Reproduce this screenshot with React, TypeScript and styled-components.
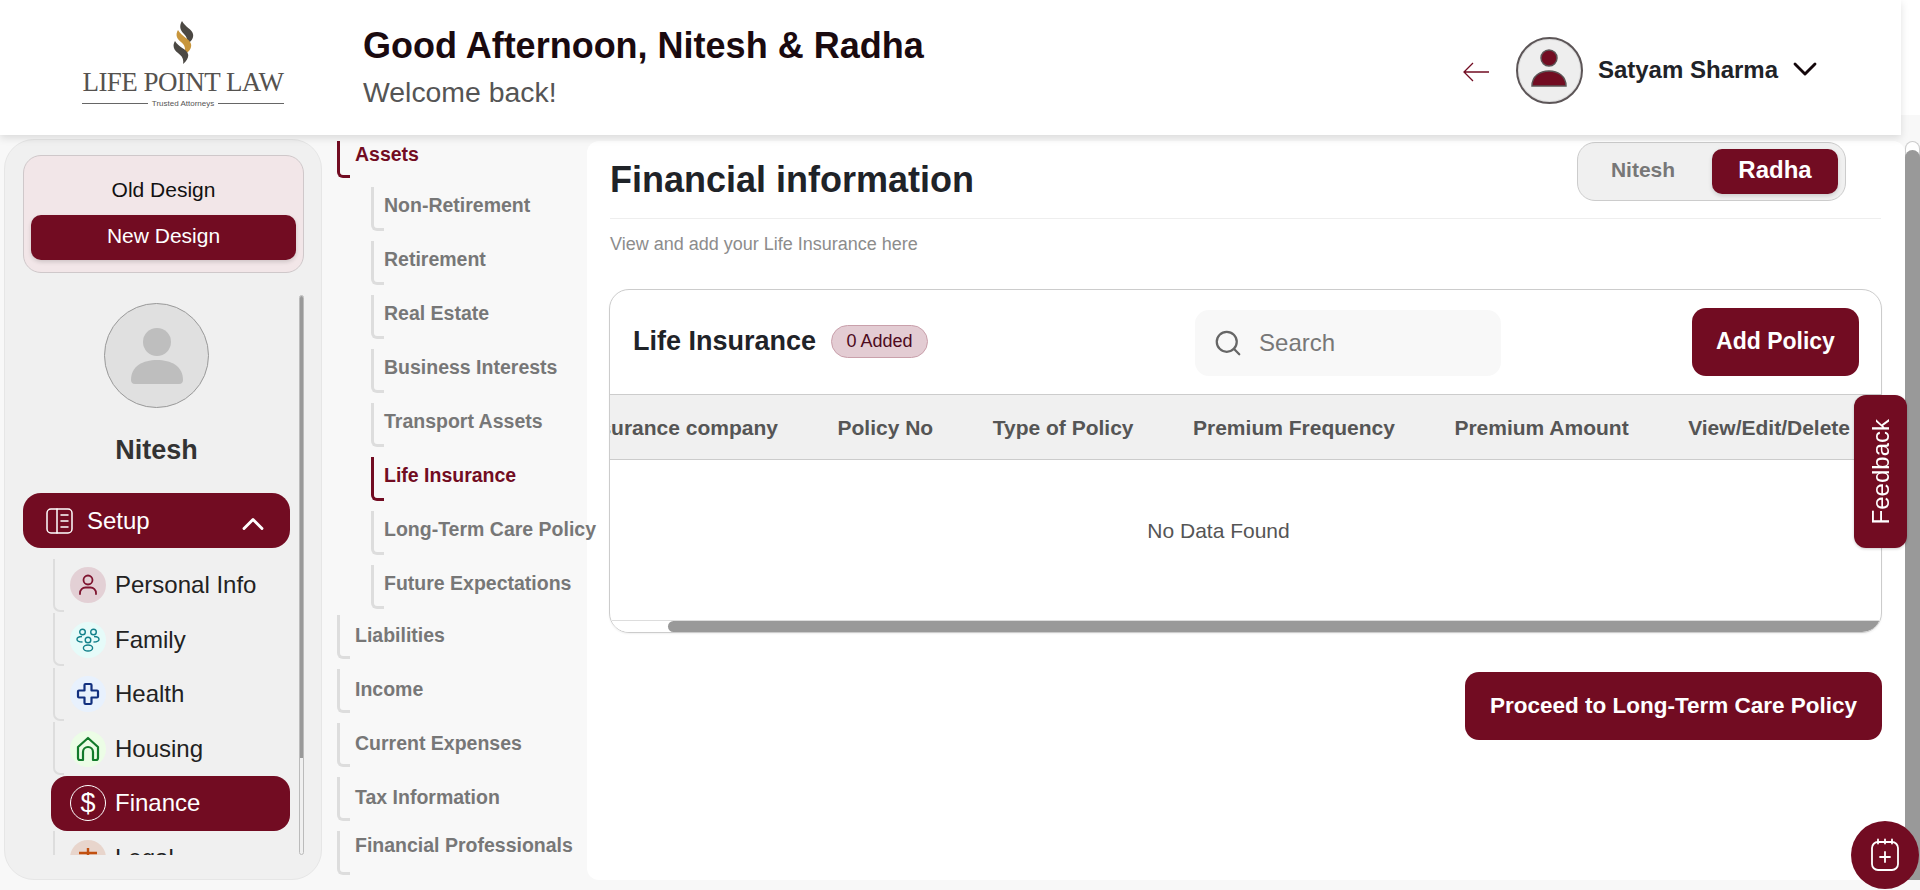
import React from "react";
import styled, { createGlobalStyle } from "styled-components";
import { ChevronDown, ChevronUp, Search } from "lucide-react";

const PRIMARY = "#720c22";

const GlobalStyle = createGlobalStyle`
  html, body {
    margin: 0;
    padding: 0;
    height: 890px;
    overflow: hidden;
    background: #f8f8f8;
    font-family: "Liberation Sans", Arial, sans-serif;
  }
  * {
    box-sizing: border-box;
  }
`;

const Page = styled.div`
  width: 1920px;
  height: 890px;
  display: flex;
  flex-direction: column;
  overflow: hidden;
  background: #f8f8f8;
`;

const TopBand = styled.div`
  height: 135px;
  flex: none;
  background: linear-gradient(#fff 115px, #f8f8f8 115px);
  position: relative;
  z-index: 3;
`;

const Header = styled.header`
  width: 1901px;
  height: 135px;
  display: flex;
  align-items: center;
  padding: 0 86px 0 82px;
  background: #fff;
  box-shadow: 0 3px 8px rgba(0, 0, 0, 0.12);
`;

const Logo = styled.div`
  width: 202px;
  margin-right: 79px;
  margin-bottom: 6px;
  display: flex;
  flex-direction: column;
  align-items: center;
`;

const LogoName = styled.div`
  font-family: "Liberation Serif", serif;
  font-size: 27px;
  line-height: 27px;
  letter-spacing: -0.55px;
  color: #55524f;
  white-space: nowrap;
  margin-top: 5px;
`;

const LogoTag = styled.div`
  width: 100%;
  display: flex;
  align-items: center;
  gap: 4px;
  margin-top: 3px;
  font-size: 8px;
  line-height: 10px;
  color: #555;
  white-space: nowrap;

  &::before,
  &::after {
    content: "";
    flex: 1;
    height: 1px;
    background: #666;
  }
`;

const Greeting = styled.div`
  display: flex;
  flex-direction: column;
  gap: 7px;
  margin-top: -2px;
`;

const Hello = styled.h1`
  margin: 0;
  font-size: 36px;
  line-height: 44px;
  font-weight: 700;
  color: #1a0a0f;
`;

const Welcome = styled.div`
  font-size: 28.4px;
  line-height: 34px;
  color: #555;
`;

const UserArea = styled.div`
  margin-left: auto;
  margin-top: 5px;
  display: flex;
  align-items: center;
`;

const BackArrow = styled.svg`
  width: 26px;
  height: 20px;
  margin-right: 27px;
  margin-top: 4px;
`;

const UserAvatar = styled.div`
  width: 67px;
  height: 67px;
  border-radius: 50%;
  border: 2px solid #5c5557;
  background: #eee;
  box-shadow: inset 0 0 0 1px #ddd;
  display: flex;
  align-items: center;
  justify-content: center;
  margin-right: 15px;
`;

const UserName = styled.div`
  font-size: 24px;
  font-weight: 700;
  color: #1f2328;
  white-space: nowrap;
  margin-right: 17px;
`;

const UserChevron = styled(ChevronDown)`
  width: 40px;
  height: 40px;
  margin: -2px -10px 0;
  color: #14070b;
  stroke-width: 1.7;
`;

const Body = styled.div`
  flex: 1;
  min-height: 0;
  display: flex;
  padding-top: 4px;
  padding-left: 4px;
`;

const Sidebar = styled.aside`
  width: 318px;
  height: 741px;
  flex: none;
  background: #f0f0f0;
  border: 1px solid #e6e6e6;
  border-radius: 30px;
  padding: 15px 17px 0 18px;
`;

const DesignCard = styled.div`
  height: 118px;
  background: #f2e6e8;
  border: 1px solid #cfc8ca;
  border-radius: 18px;
  padding: 0 7px;
  display: flex;
  flex-direction: column;
  align-items: stretch;
`;

const OldDesign = styled.div`
  height: 59px;
  display: flex;
  align-items: center;
  justify-content: center;
  font-size: 21px;
  padding-top: 9px;
  color: #111;
`;

const NewDesign = styled.div`
  height: 45px;
  display: flex;
  align-items: center;
  justify-content: center;
  border-radius: 10px;
  background: ${PRIMARY};
  color: #fff;
  font-size: 21px;
  padding-bottom: 3px;
  box-shadow: 0 2px 4px rgba(0, 0, 0, 0.15);
`;

const SideScroll = styled.div`
  height: 560px;
  margin-top: 22px;
  display: flex;
  overflow: hidden;
`;

const SideContent = styled.div`
  width: 267px;
  flex: none;
  overflow: hidden;
`;

const SideTrack = styled.div`
  width: 5px;
  height: 560px;
  margin-left: 9px;
  border: 1px solid #bbb;
  border-radius: 3px;
  overflow: hidden;
`;

const SideThumb = styled.div`
  height: 462px;
  background: #999;
`;

const ProfilePhoto = styled.div`
  width: 105px;
  height: 105px;
  margin: 8px auto 0;
  border-radius: 50%;
  border: 1px solid #999;
  background: #e0e0e0;
  display: flex;
  align-items: center;
  justify-content: center;
`;

const ProfileName = styled.div`
  margin-top: 26px;
  text-align: center;
  font-size: 27px;
  line-height: 32px;
  font-weight: 700;
  color: #333;
`;

const SetupButton = styled.div`
  height: 55px;
  margin-top: 27px;
  border-radius: 18px;
  background: ${PRIMARY};
  color: #fff;
  display: flex;
  align-items: center;
  padding: 0 19px 0 23px;
  font-size: 24px;
  gap: 14px;
`;

const SetupChevron = styled(ChevronUp)`
  margin-left: auto;
  margin-top: 6px;
  width: 36px;
  height: 36px;
  stroke-width: 1.9;
`;

const MenuList = styled.div`
  margin-top: 10px;
  padding-left: 30px;
`;

const MenuRow = styled.div<{ $active?: boolean }>`
  height: 54.5px;
  display: flex;
  align-items: center;
  font-size: 24px;
  color: ${(p) => (p.$active ? "#fff" : "#222")};
  background: ${(p) => (p.$active ? PRIMARY : "transparent")};
  border-radius: ${(p) => (p.$active ? "16px" : "0")};
  margin-left: ${(p) => (p.$active ? "-2px" : "0")};
  padding-left: ${(p) => (p.$active ? "2px" : "0")};
`;

const MenuBracket = styled.span<{ $hidden?: boolean }>`
  width: 11px;
  height: 53px;
  flex: none;
  border-left: 2px solid ${(p) => (p.$hidden ? "transparent" : "#ddd")};
  border-bottom: 2px solid ${(p) => (p.$hidden ? "transparent" : "#ddd")};
  border-bottom-left-radius: 7px;
  margin-right: 6px;
`;

const IconCircle = styled.span<{ $bg: string; $outlined?: boolean }>`
  width: 36px;
  height: 36px;
  flex: none;
  border-radius: 50%;
  background: ${(p) => p.$bg};
  border: ${(p) => (p.$outlined ? "1.5px solid #fff" : "none")};
  display: flex;
  align-items: center;
  justify-content: center;
  margin-right: 9px;
`;

const DollarSign = styled.span`
  font-size: 27px;
  line-height: 27px;
  color: #fff;
`;

const SubNav = styled.nav`
  width: 265px;
  flex: none;
  display: flex;
  flex-direction: column;
  padding: 2px 0 0 15px;
  position: relative;
  z-index: 1;
`;

const NavRow = styled.div<{ $active?: boolean; $height?: number }>`
  height: ${(p) => p.$height ?? 43.5}px;
  flex: none;
  display: flex;
  align-items: flex-start;
  margin-bottom: 10.5px;
  font-size: 19.5px;
  line-height: 24px;
  font-weight: 700;
  white-space: nowrap;
  color: ${(p) => (p.$active ? PRIMARY : "#777")};
`;

const NavBracket = styled.span<{ $active?: boolean }>`
  width: 13px;
  height: 100%;
  flex: none;
  border-left: 3px solid ${(p) => (p.$active ? PRIMARY : "#ddd")};
  border-bottom: 3px solid ${(p) => (p.$active ? PRIMARY : "#ddd")};
  border-bottom-left-radius: 6px;
`;

const NavLabel = styled.span<{ $top: number; $gap?: number }>`
  margin-top: ${(p) => p.$top}px;
  margin-left: ${(p) => p.$gap ?? 5}px;
`;

const SubGroup = styled.div`
  flex: none;
  padding-left: 34px;
  margin-top: -1.5px;
  margin-bottom: -4px;
`;

const Main = styled.main`
  width: 1318px;
  height: 739px;
  flex: none;
  margin-top: 2px;
  background: #fff;
  border-radius: 12px;
  padding: 0 24px 0 23px;
`;

const TitleRow = styled.div`
  height: 78px;
  border-bottom: 1px solid #eee;
  display: flex;
  justify-content: space-between;
  align-items: flex-start;
  padding-right: 35px;
`;

const PageTitle = styled.h2`
  margin: 18px 0 0;
  font-size: 36px;
  line-height: 42px;
  font-weight: 700;
  color: #1f2328;
`;

const Toggle = styled.div`
  width: 269px;
  height: 59px;
  margin-top: 1px;
  border: 1px solid #ccc;
  border-radius: 18px;
  background: #f0f0f0;
  display: flex;
  align-items: center;
  padding: 0 7px 0 0;
`;

const ToggleOption = styled.div<{ $active?: boolean }>`
  height: 45px;
  flex: ${(p) => (p.$active ? "0 0 126px" : "1")};
  display: flex;
  align-items: center;
  justify-content: center;
  border-radius: 10px;
  font-weight: 700;
  font-size: ${(p) => (p.$active ? "24px" : "21px")};
  color: ${(p) => (p.$active ? "#fff" : "#777")};
  background: ${(p) => (p.$active ? PRIMARY : "transparent")};
  box-shadow: ${(p) => (p.$active ? "0 2px 4px rgba(0,0,0,0.15)" : "none")};
  padding-bottom: 3px;
  padding-right: ${(p) => (p.$active ? "0" : "4px")};
`;

const Subtitle = styled.p`
  margin: 15px 0 0;
  font-size: 18px;
  line-height: 20px;
  color: #8c8c8c;
`;

const TableCard = styled.section`
  margin: 35px -1px 0;
  height: 344px;
  border: 1px solid #ccc;
  border-radius: 20px;
  overflow: hidden;
  display: flex;
  flex-direction: column;
  box-shadow: 0 1px 2px rgba(0, 0, 0, 0.06);
`;

const CardHead = styled.div`
  height: 104px;
  flex: none;
  display: flex;
  align-items: center;
  padding: 0 22px 0 23px;
`;

const CardTitle = styled.h3`
  margin: -1px 15px 0 0;
  font-size: 27px;
  font-weight: 700;
  color: #1f2328;
`;

const CountBadge = styled.span`
  height: 33px;
  width: 97px;
  display: flex;
  align-items: center;
  justify-content: center;
  border: 1px solid #c9a0ab;
  border-radius: 17px;
  background: #e3ccd3;
  color: #4e0a1c;
  font-size: 18px;
  margin-top: -1px;
`;

const SearchBox = styled.div`
  width: 306px;
  height: 66px;
  margin-left: 267px;
  margin-top: 2px;
  border-radius: 14px;
  background: #f8f8f8;
  display: flex;
  align-items: center;
  gap: 16px;
  padding-left: 18px;
  color: #777;
  font-size: 24px;
`;

const SearchIcon = styled(Search)`
  width: 30px;
  height: 30px;
  stroke-width: 1.8;
  color: #666;
`;

const PrimaryButton = styled.button<{ $w: number; $size?: number }>`
  width: ${(p) => p.$w}px;
  height: 68px;
  flex: none;
  border: none;
  border-radius: 14px;
  background: ${PRIMARY};
  color: #fff;
  font-family: inherit;
  font-size: ${(p) => p.$size ?? 23}px;
  font-weight: 700;
  white-space: nowrap;
  padding: 0 0 1px;
`;

const AddButton = styled(PrimaryButton)`
  margin-left: auto;
`;

const TableHead = styled.div`
  height: 66px;
  flex: none;
  border-top: 1px solid #ccc;
  border-bottom: 1px solid #ccc;
  background: #f0f0f0;
  display: flex;
  align-items: center;
  justify-content: flex-end;
  gap: 59.5px;
  overflow: hidden;
  padding: 2px 31px 0 0;
  font-size: 21px;
  font-weight: 700;
  color: #555;
  white-space: nowrap;
`;

const TableBody = styled.div`
  flex: 1;
  display: flex;
  align-items: center;
  justify-content: center;
  padding-right: 54px;
  padding-bottom: 18px;
  font-size: 21px;
  color: #555;
`;

const HScroll = styled.div`
  height: 12px;
  flex: none;
  padding-left: 58px;
  background: #fff;
  border-top: 1px solid #ddd;
`;

const HThumb = styled.div`
  height: 100%;
  background: #999;
  border-radius: 6px 0 0 6px;
`;

const ProceedRow = styled.div`
  margin: 39px -1px 0 0;
  display: flex;
  justify-content: flex-end;
`;

const PageScroll = styled.div`
  width: 15px;
  height: 739px;
  flex: none;
  margin-top: 2px;
  background: #fff;
  border: 1px solid #ccc;
  border-bottom: none;
  border-radius: 8px 8px 0 0;
  padding-top: 8px;
`;

const PageThumb = styled.div`
  height: 100%;
  margin: 0 -1px;
  background: #999;
  border-radius: 8px 8px 0 0;
`;

const FeedbackTab = styled.div`
  position: fixed;
  left: 1854px;
  top: 395px;
  width: 53px;
  height: 153px;
  border-radius: 12px;
  background: ${PRIMARY};
  color: #fff;
  font-size: 24px;
  display: flex;
  align-items: center;
  justify-content: center;
  z-index: 5;
  box-shadow: 0 1px 3px rgba(0, 0, 0, 0.2);
`;

const FeedbackText = styled.span`
  writing-mode: vertical-rl;
  transform: rotate(180deg);
`;

const CalendarFab = styled.div`
  position: fixed;
  left: 1851px;
  top: 821px;
  width: 68px;
  height: 68px;
  border-radius: 50%;
  background: ${PRIMARY};
  display: flex;
  align-items: center;
  justify-content: center;
  z-index: 5;
`;

const FlameLogo = () => (
  <svg width="21" height="43" viewBox="0 0 21 43">
    <path d="M9 0C6 5 7 9 11 13c3 3 4 6 2 11 5-3 8-7 7-11-1-5-8-7-11-13Z" fill="#4b4843" />
    <path d="M5 9C2 14 4 18 8 21c4 3 5 7 3 13 5-3 8-7 7-11-1-5-10-8-13-14Z" fill="#c8963c" />
    <path d="M2 20c-3 5-1 9 3 12 4 3 6 6 5 11 4-3 6-7 5-10-1-5-10-7-13-13Z" fill="#4b4843" />
  </svg>
);

const AvatarGlyph = () => (
  <svg width="38" height="42" viewBox="0 0 38 42">
    <circle cx="19" cy="9" r="8" fill={PRIMARY} stroke="#5c5557" strokeWidth="1.5" />
    <path d="M2 37c0-10 8-15 17-15s17 5 17 15Z" fill={PRIMARY} stroke="#5c5557" strokeWidth="1.5" />
  </svg>
);

const ProfileGlyph = () => (
  <svg width="56" height="56" viewBox="0 0 56 56">
    <circle cx="28" cy="14" r="14" fill="#bebebe" />
    <path d="M2 52c0-14 12-20 26-20s26 6 26 20c0 2-1 4-4 4H6c-3 0-4-2-4-4Z" fill="#bebebe" />
  </svg>
);

const SetupGlyph = () => (
  <svg width="27" height="26" viewBox="0 0 27 26" fill="none" stroke="#fff" strokeWidth="1.5" strokeLinecap="round">
    <rect x="1" y="1" width="25" height="24" rx="4" />
    <path d="M11 1v24M15 7h7M15 13h7M15 19h7" />
  </svg>
);

const PersonGlyph = () => (
  <svg width="24" height="24" viewBox="0 0 24 24" fill="none" stroke="#7f1530" strokeWidth="1.8" strokeLinecap="round">
    <circle cx="12" cy="7" r="4.5" />
    <path d="M4 21v-1a5.500 5.500 0 0 1 5.500-5.500h5A5.500 5.500 0 0 1 20 20v1" />
  </svg>
);

const FamilyGlyph = () => (
  <svg width="24" height="24" viewBox="0 0 24 24" fill="none" stroke="#12808a" strokeWidth="1.4">
    <circle cx="6.5" cy="4" r="2.8" />
    <circle cx="17.5" cy="4" r="2.8" />
    <circle cx="12" cy="12" r="2.8" />
    <ellipse cx="12" cy="20" rx="4.6" ry="3" />
    <path d="M6 8.500c-3.500 0-5 1.500-5 2.800S3 14 6.500 14M18 8.500c3.500 0 5 1.500 5 2.800S21 14 17.500 14" />
  </svg>
);

const HealthGlyph = () => (
  <svg width="24" height="24" viewBox="0 0 24 24" fill="none" stroke="#12307f" strokeWidth="2.2" strokeLinejoin="round">
    <path d="M9.500 2h5a1 1 0 0 1 1 1v5.500H21a1 1 0 0 1 1 1v5a1 1 0 0 1-1 1h-5.500V21a1 1 0 0 1-1 1h-5a1 1 0 0 1-1-1v-5.500H3a1 1 0 0 1-1-1v-5a1 1 0 0 1 1-1h5.500V3a1 1 0 0 1 1-1Z" />
  </svg>
);

const HousingGlyph = () => (
  <svg width="24" height="26" viewBox="0 0 24 26" fill="none" stroke="#137a2b" strokeWidth="2.2" strokeLinejoin="round">
    <path d="M12 2 2 11v11a2 2 0 0 0 2 2h3v-8a5 5 0 0 1 10 0v8h3a2 2 0 0 0 2-2V11Z" />
  </svg>
);

const LegalGlyph = () => (
  <svg width="24" height="24" viewBox="0 0 24 24" fill="none" stroke="#c2500f" strokeWidth="2.4">
    <path d="M12 2v20M3 7h18M6 22h12" />
  </svg>
);

const CalendarGlyph = () => (
  <svg width="30" height="34" viewBox="0 0 30 34" fill="none" stroke="#fff" strokeWidth="1.8" strokeLinecap="round">
    <rect x="2" y="4" width="26" height="28" rx="6" />
    <path d="M8 1.500v4M15 1.500v4M22 1.500v4M15 14v10M10 19h10" />
  </svg>
);

const subItems = [
  { label: "Non-Retirement" },
  { label: "Retirement" },
  { label: "Real Estate" },
  { label: "Business Interests" },
  { label: "Transport Assets" },
  { label: "Life Insurance", active: true },
  { label: "Long-Term Care Policy" },
  { label: "Future Expectations" },
];

const topItems = ["Liabilities", "Income", "Current Expenses", "Tax Information"];

const columns = [
  "Insurance company",
  "Policy No",
  "Type of Policy",
  "Premium Frequency",
  "Premium Amount",
  "View/Edit/Delete",
];

const App = () => {
  return (
    <Page>
      <GlobalStyle />
      <TopBand>
        <Header>
          <Logo>
            <FlameLogo />
            <LogoName>LIFE POINT LAW</LogoName>
            <LogoTag>Trusted Attorneys</LogoTag>
          </Logo>
          <Greeting>
            <Hello>Good Afternoon, Nitesh &amp; Radha</Hello>
            <Welcome>Welcome back!</Welcome>
          </Greeting>
          <UserArea>
            <BackArrow viewBox="0 0 26 20" fill="none" stroke={PRIMARY} strokeWidth="1.3">
              <path d="M26 10H1M10 1 1 10l9 9" />
            </BackArrow>
            <UserAvatar>
              <AvatarGlyph />
            </UserAvatar>
            <UserName>Satyam Sharma</UserName>
            <UserChevron />
          </UserArea>
        </Header>
      </TopBand>
      <Body>
        <Sidebar>
          <DesignCard>
            <OldDesign>Old Design</OldDesign>
            <NewDesign>New Design</NewDesign>
          </DesignCard>
          <SideScroll>
            <SideContent>
              <ProfilePhoto>
                <ProfileGlyph />
              </ProfilePhoto>
              <ProfileName>Nitesh</ProfileName>
              <SetupButton>
                <SetupGlyph />
                Setup
                <SetupChevron />
              </SetupButton>
              <MenuList>
                <MenuRow>
                  <MenuBracket />
                  <IconCircle $bg="#e3d0d5">
                    <PersonGlyph />
                  </IconCircle>
                  Personal Info
                </MenuRow>
                <MenuRow>
                  <MenuBracket />
                  <IconCircle $bg="#e6fbf9">
                    <FamilyGlyph />
                  </IconCircle>
                  Family
                </MenuRow>
                <MenuRow>
                  <MenuBracket />
                  <IconCircle $bg="#e8f1fd">
                    <HealthGlyph />
                  </IconCircle>
                  Health
                </MenuRow>
                <MenuRow>
                  <MenuBracket />
                  <IconCircle $bg="#ecfde6">
                    <HousingGlyph />
                  </IconCircle>
                  Housing
                </MenuRow>
                <MenuRow $active>
                  <MenuBracket $hidden />
                  <IconCircle $bg="transparent" $outlined>
                    <DollarSign>$</DollarSign>
                  </IconCircle>
                  Finance
                </MenuRow>
                <MenuRow>
                  <MenuBracket />
                  <IconCircle $bg="#e8d5cc">
                    <LegalGlyph />
                  </IconCircle>
                  Legal
                </MenuRow>
              </MenuList>
            </SideContent>
            <SideTrack>
              <SideThumb />
            </SideTrack>
          </SideScroll>
        </Sidebar>
        <SubNav>
          <NavRow $active $height={37}>
            <NavBracket $active />
            <NavLabel $top={1}>Assets</NavLabel>
          </NavRow>
          <SubGroup>
            {subItems.map((item) => (
              <NavRow key={item.label} $active={item.active}>
                <NavBracket $active={item.active} />
                <NavLabel $top={6} $gap={0}>
                  {item.label}
                </NavLabel>
              </NavRow>
            ))}
          </SubGroup>
          {topItems.map((label) => (
            <NavRow key={label}>
              <NavBracket />
              <NavLabel $top={8}>{label}</NavLabel>
            </NavRow>
          ))}
          <NavRow>
            <NavBracket />
            <NavLabel $top={2}>Financial Professionals</NavLabel>
          </NavRow>
        </SubNav>
        <Main>
          <TitleRow>
            <PageTitle>Financial information</PageTitle>
            <Toggle>
              <ToggleOption>Nitesh</ToggleOption>
              <ToggleOption $active>Radha</ToggleOption>
            </Toggle>
          </TitleRow>
          <Subtitle>View and add your Life Insurance here</Subtitle>
          <TableCard>
            <CardHead>
              <CardTitle>Life Insurance</CardTitle>
              <CountBadge>0 Added</CountBadge>
              <SearchBox>
                <SearchIcon />
                Search
              </SearchBox>
              <AddButton $w={167}>Add Policy</AddButton>
            </CardHead>
            <TableHead>
              {columns.map((c) => (
                <span key={c}>{c}</span>
              ))}
            </TableHead>
            <TableBody>No Data Found</TableBody>
            <HScroll>
              <HThumb />
            </HScroll>
          </TableCard>
          <ProceedRow>
            <PrimaryButton $w={417} $size={22.5}>
              Proceed to Long-Term Care Policy
            </PrimaryButton>
          </ProceedRow>
        </Main>
        <PageScroll>
          <PageThumb />
        </PageScroll>
      </Body>
      <FeedbackTab>
        <FeedbackText>Feedback</FeedbackText>
      </FeedbackTab>
      <CalendarFab>
        <CalendarGlyph />
      </CalendarFab>
    </Page>
  );
};

export default App;
